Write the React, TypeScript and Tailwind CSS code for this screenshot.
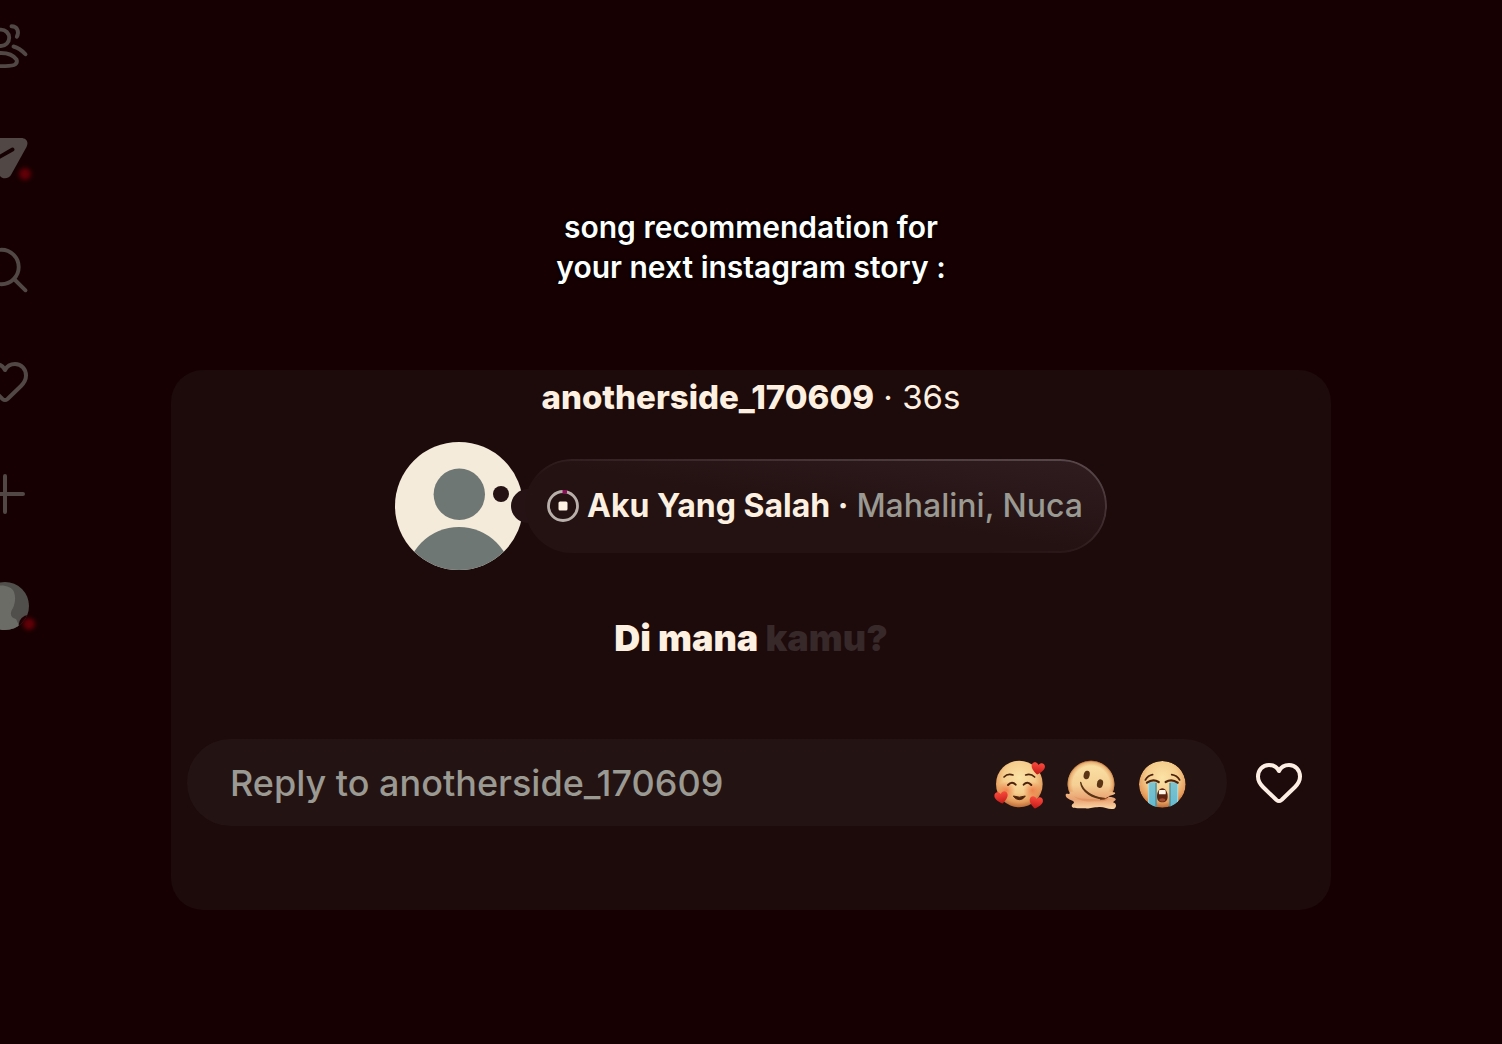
import React from "react";

const HEART =
  "M24 12C22 8 18 6 14 6C7.500 6 3 11 3 17.500C3 22 5 25 8 28L21.500 41Q24 43 26.500 41L40 28C43 25 45 22 45 17.500C45 11 40.500 6 34 6C30 6 26 8 24 12Z";

function HeartIcon() {
  return (
    <svg viewBox="0 0 48 48" className="size-12" fill="none" stroke="currentColor" strokeWidth="4" strokeLinejoin="round" aria-hidden="true">
      <path d={HEART} />
    </svg>
  );
}

function FriendsIcon() {
  return (
    <svg viewBox="0 0 48 48" className="size-12" fill="none" stroke="currentColor" strokeWidth="3.900" strokeLinecap="round" strokeLinejoin="round" aria-hidden="true">
      <circle cx="20" cy="15.800" r="8.200" />
      <path d="M20 31C28 31 33 34 35.500 37.500C36.500 40 35.500 42 33 43C28 44.500 12 44.500 7 43C4.500 42 3.500 40 4.500 37.500C7 34 12 31 20 31Z" />
      <path d="M30.500 4.200C36.500 4.200 38.500 10 35.800 14.800" />
      <path d="M32.500 24.500C37.500 25.800 41 28.500 44.500 32.300" />
    </svg>
  );
}

function SendIcon() {
  return (
    <svg viewBox="0 0 48 48" className="size-12" aria-hidden="true">
      <path fill="currentColor" d="M5 4H40C45.500 4 48 8 45.500 13L30.500 40C28 45.500 20.500 45.500 18.500 41L15 26L3 12C0 8 1 4 5 4Z" />
      <path d="M13 26L31.500 15.500" stroke="#160002" strokeWidth="3.800" strokeLinecap="round" />
    </svg>
  );
}

function SearchIcon() {
  return (
    <svg viewBox="0 0 48 48" className="size-12" fill="none" stroke="currentColor" strokeWidth="3.900" strokeLinecap="round" aria-hidden="true">
      <circle cx="20.500" cy="21" r="17.200" />
      <path d="M33 33L44.500 44.300" />
    </svg>
  );
}

function PlusIcon() {
  return (
    <svg viewBox="0 0 48 48" className="size-12" fill="none" stroke="currentColor" strokeWidth="4" strokeLinecap="round" aria-hidden="true">
      <path d="M24 6V42M6 24H42" />
    </svg>
  );
}

function ProfileIcon() {
  return (
    <svg viewBox="0 0 48 48" className="size-12" aria-hidden="true">
      <defs>
        <clipPath id="profile-clip">
          <circle cx="24" cy="24" r="24" />
        </clipPath>
      </defs>
      <g clipPath="url(#profile-clip)">
        <rect width="48" height="48" fill="#514f4b" />
        <path fill="#6c6c67" d="M12 5C20 2 31 4 33 10C35 16 34 21 32 26C28 32 30 36 35 37L40 48H0V20Z" />
        <circle cx="47.700" cy="43" r="10" fill="#160002" />
      </g>
    </svg>
  );
}

const NAV = [
  { label: "Friends", icon: <FriendsIcon />, dot: "hidden" },
  { label: "Messages", icon: <SendIcon />, dot: "-right-0.5 bottom-0.5" },
  { label: "Search", icon: <SearchIcon />, dot: "hidden" },
  { label: "Notifications", icon: <HeartIcon />, dot: "hidden" },
  { label: "Create", icon: <PlusIcon />, dot: "hidden" },
  { label: "Profile", icon: <ProfileIcon />, dot: "-right-1.5 bottom-0" },
];

function SideNav() {
  return (
    <nav className="flex w-[171px] shrink-0 flex-col items-start gap-16 overflow-hidden pt-[22px] text-[#514745]">
      {NAV.map((item) => (
        <button key={item.label} type="button" aria-label={item.label} className="relative -ml-[19px] size-12">
          {item.icon}
          <span className={`absolute size-3 rounded-full bg-[#620007] blur-[2px] ${item.dot}`} />
        </button>
      ))}
    </nav>
  );
}

function Avatar() {
  return (
    <svg viewBox="0 0 128 128" className="size-32 shrink-0 overflow-visible" role="img" aria-label="anotherside_170609">
      <defs>
        <clipPath id="avatar-clip">
          <circle cx="64" cy="64" r="64" />
        </clipPath>
      </defs>
      <g clipPath="url(#avatar-clip)">
        <rect width="128" height="128" fill="#f4ebdb" />
        <circle cx="64.300" cy="52.300" r="25.700" fill="#6e7773" />
        <circle cx="64" cy="138" r="53" fill="#6e7773" />
      </g>
      <circle cx="106" cy="52" r="8" fill="#241214" />
      <circle cx="133" cy="64" r="17" fill="#241214" />
    </svg>
  );
}

function StopRing() {
  return (
    <svg viewBox="0 0 32 32" className="size-8 shrink-0" fill="none" aria-hidden="true">
      <circle cx="16" cy="16" r="14.500" stroke="#b9b0ab" strokeWidth="2.800" />
      <path d="M15.500 1.800H20" stroke="#8c0f5a" strokeWidth="3.600" />
      <rect x="11.500" y="11.500" width="9" height="9" rx="1.500" fill="#fdf1e4" />
    </svg>
  );
}

function SmallHeart({ x, y, turn }: { x: number; y: number; turn: number }) {
  return (
    <path
      transform={`translate(${x} ${y}) rotate(${turn})`}
      fill="url(#emoji-heart)"
      d="M0 19C-9 13-20 4-20-6C-20-18-6-21 0-10C6-21 20-18 20-6C20 4 9 13 0 19Z"
    />
  );
}

function EmojiDefs() {
  return (
    <defs>
      <radialGradient id="emoji-skin" cx="0.5" cy="0.36" r="0.68">
        <stop offset="0" stopColor="#fbe3a6" />
        <stop offset="0.5" stopColor="#f5cd8d" />
        <stop offset="0.78" stopColor="#e59c5c" />
        <stop offset="1" stopColor="#a9582a" />
      </radialGradient>
      <linearGradient id="emoji-heart" x1="0" y1="0" x2="0" y2="1">
        <stop offset="0" stopColor="#fb4a3c" />
        <stop offset="1" stopColor="#c21a18" />
      </linearGradient>
      <radialGradient id="emoji-blush">
        <stop offset="0" stopColor="#ee6f3c" stopOpacity="0.75" />
        <stop offset="1" stopColor="#ee6f3c" stopOpacity="0" />
      </radialGradient>
      <linearGradient id="emoji-melt" x1="0" y1="0" x2="0" y2="1">
        <stop offset="0" stopColor="#fbe3a6" />
        <stop offset="0.5" stopColor="#f5cf94" />
        <stop offset="0.8" stopColor="#e9a272" />
        <stop offset="1" stopColor="#fbd9a8" />
      </linearGradient>
      <radialGradient id="emoji-melt-edge" gradientUnits="userSpaceOnUse" cx="108" cy="114" r="71">
        <stop offset="0.78" stopColor="#d98545" stopOpacity="0" />
        <stop offset="0.92" stopColor="#d98545" stopOpacity="0.45" />
        <stop offset="1" stopColor="#b8672f" stopOpacity="0.9" />
      </radialGradient>
      <linearGradient id="emoji-tear" x1="0" y1="0" x2="0" y2="1">
        <stop offset="0" stopColor="#7fc3cf" />
        <stop offset="1" stopColor="#5fb9cf" />
      </linearGradient>
    </defs>
  );
}

function LoveEmoji() {
  return (
    <svg viewBox="40 32 156 156" className="size-[52px] overflow-visible" aria-hidden="true">
      <EmojiDefs />
      <circle cx="119" cy="113" r="70" fill="url(#emoji-skin)" />
      <circle cx="80" cy="132" r="27" fill="url(#emoji-blush)" />
      <circle cx="158" cy="132" r="27" fill="url(#emoji-blush)" />
      <g fill="none" stroke="#4d230d" strokeLinecap="round" strokeWidth="5">
        <path d="M73 92Q84 80 100 86" />
        <path d="M138 86Q153 80 165 92" />
        <path d="M85 116Q97 103 108 115" strokeWidth="6" />
        <path d="M132 115Q143 103 155 116" strokeWidth="6" />
      </g>
      <path d="M101 149Q119 156 137 149Q131 160 119 160Q107 160 101 149Z" fill="#4d230d" stroke="#4d230d" strokeWidth="3" strokeLinejoin="round" />
      <SmallHeart x={175} y={66} turn={8} />
      <SmallHeart x={65} y={153} turn={-10} />
      <SmallHeart x={169} y={168} turn={10} />
    </svg>
  );
}

function MeltingEmoji() {
  return (
    <svg viewBox="30 32 156 156" className="size-[52px] overflow-visible" aria-hidden="true">
      <path
        fill="url(#emoji-melt)"
        d="M38 114C38 74 70 44 108 44C146 44 178 74 178 114C178 122 176 132 173 138C182 137 183 143 175 145L160 150C167 154 176 151 182 158C184 163 174 164 174 168C186 170 186 186 174 188C160 190 148 181 132 182C112 183 104 188 88 186C70 184 50 188 50 178C51 170 62 171 54 164C46 160 31 156 32 145C34 138 44 148 44 139C40 131 38 121 38 114Z"
      />
      <path d="M42 136A70 70 0 1 1 174 136Z" fill="url(#emoji-melt-edge)" />
      <path d="M56 150C80 162 105 156 124 159C138 161 150 157 160 151C164 160 148 166 134 165C110 164 84 172 56 150Z" fill="#dd8a58" opacity="0.55" />
      <ellipse cx="95" cy="86" rx="9" ry="13" fill="#5a3414" transform="rotate(14 95 86)" />
      <ellipse cx="135" cy="112" rx="9" ry="13" fill="#5a3414" transform="rotate(14 135 112)" />
      <path d="M77 108C82 130 108 153 148 156C114 158 80 136 77 108Z" fill="#5a3414" stroke="#5a3414" strokeWidth="4" strokeLinejoin="round" />
      <path d="M136 160Q150 161 159 153" stroke="#8a4420" strokeWidth="3" strokeLinecap="round" fill="none" />
    </svg>
  );
}

function CryingEmoji() {
  return (
    <svg viewBox="246 32 156 156" className="size-[52px]" aria-hidden="true">
      <defs>
        <clipPath id="cry-clip">
          <circle cx="322" cy="114" r="70" />
        </clipPath>
      </defs>
      <g clipPath="url(#cry-clip)">
        <circle cx="322" cy="114" r="70" fill="url(#emoji-skin)" />
        <path d="M280 108H305V190H280Z" fill="url(#emoji-tear)" />
        <path d="M344 108H369V190H344Z" fill="url(#emoji-tear)" />
        <path d="M303 110V190M345 110V190" stroke="#3c7f8c" strokeWidth="3" />
        <path d="M281 110V190M368 110V190" stroke="#b0e2e6" strokeWidth="2.500" />
      </g>
      <g fill="none" stroke="#4d230d" strokeLinecap="round" strokeWidth="5">
        <path d="M271 101Q279 87 293 85" />
        <path d="M350 85Q366 87 374 101" />
        <path d="M276 109Q294 96 311 107" strokeWidth="7" />
        <path d="M332 107Q350 96 368 109" strokeWidth="7" />
      </g>
      <path d="M322 126C332 126 338 138 338 150C338 162 332 168 322 168C312 168 306 162 306 150C306 138 312 126 322 126Z" fill="#5a2411" />
      <path d="M313 131H331Q334 139 332 144H312Q310 139 313 131Z" fill="#fff4e6" />
      <ellipse cx="322" cy="161" rx="9" ry="5" fill="#a0492c" />
    </svg>
  );
}

const REACTIONS = [
  { label: "Smiling face with hearts", icon: <LoveEmoji /> },
  { label: "Melting face", icon: <MeltingEmoji /> },
  { label: "Loudly crying face", icon: <CryingEmoji /> },
];

export default function App() {
  return (
    <div className="flex min-h-screen overflow-hidden bg-[#160002] font-['Inter',sans-serif]">
      <SideNav />
      <main className="min-w-0 flex-1 pt-[207px] pr-[171px]">
        <h1 className="text-center text-[30px] leading-10 font-semibold text-white [text-shadow:0_0_3px_#000,0_0_3px_#000]">
          song recommendation for
          <br />
          your next instagram story :
        </h1>

        <section className="mt-[83px] rounded-[32px] bg-[#1d0a0b] px-4 pt-[7px] pb-[84px] text-[#fdf0e0]">
          <p className="text-center text-[33px] leading-10">
            <strong className="font-extrabold">anotherside_170609</strong> · 36s
          </p>

          <div className="mt-[25px] flex items-center justify-center gap-0.5">
            <Avatar />
            <button
              type="button"
              className="relative flex h-[94px] items-center gap-2 rounded-full bg-linear-to-bl from-[#2f1d20] to-[#241213] to-50% pr-6 pl-[22px] text-[32px] leading-10 whitespace-nowrap"
            >
              <span className="pointer-events-none absolute inset-0 rounded-full border-2 border-[#5b4a4d] mask-[linear-gradient(to_bottom_left,#000,transparent_60%)]" />
              <StopRing />
              <span className="font-bold">Aku Yang Salah ·</span>
              <span className="font-medium text-[#9a9992]">Mahalini, Nuca</span>
            </button>
          </div>

          <p className="mt-12 text-center text-[36px] leading-10 font-black">
            Di mana <span className="text-[#37282a]">kamu?</span>
          </p>

          <div className="mt-[81px] flex items-center gap-7 pr-3">
            <form className="flex h-[87px] min-w-0 flex-1 items-center rounded-full bg-[#241313] pr-[38px] pl-[43px]" onSubmit={(e) => e.preventDefault()}>
              <input
                type="text"
                aria-label="Reply to anotherside_170609"
                placeholder="Reply to anotherside_170609"
                className="min-w-0 flex-1 bg-transparent text-[36px] leading-10 font-medium outline-none placeholder:text-[#9a9992]"
              />
              <div className="flex gap-5">
                {REACTIONS.map((r) => (
                  <button key={r.label} type="button" aria-label={r.label}>
                    {r.icon}
                  </button>
                ))}
              </div>
            </form>
            <button type="button" aria-label="Like story" className="text-[#fdeee4]">
              <HeartIcon />
            </button>
          </div>
        </section>
      </main>
    </div>
  );
}
